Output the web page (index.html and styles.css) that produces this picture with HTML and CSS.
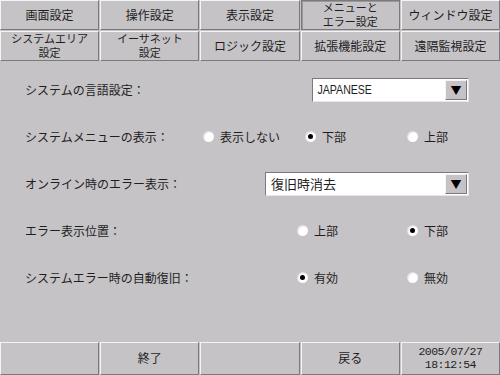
FILE: index.html
```html
<!DOCTYPE html>
<html lang="ja">
<head>
    <meta charset="UTF-8">
    <title>システム設定</title>
    <link rel="stylesheet" href="styles.css">
</head>
<body>
    <div class="screen">
        <!-- Tabs -->
        <div class="tabs">
            <div class="tab">画面設定</div>
            <div class="tab">操作設定</div>
            <div class="tab">表示設定</div>
            <div class="tab active wrap">メニューと<br>エラー設定</div>
            <div class="tab">ウィンドウ設定</div>
            <div class="tab wrap">システムエリア<br>設定</div>
            <div class="tab wrap">イーサネット<br>設定</div>
            <div class="tab">ロジック設定</div>
            <div class="tab">拡張機能設定</div>
            <div class="tab">遠隔監視設定</div>
        </div>

        <!-- Settings -->
        <div class="settings">
            <div class="row">
                <span class="label">システムの言語設定：</span>
                <div class="select lang">
                    <span class="select-text small">JAPANESE</span>
                    <span class="select-btn">▼</span>
                </div>
            </div>
            <div class="row">
                <span class="label">システムメニューの表示：</span>
                <div class="options three">
                    <span class="radio"><i></i>表示しない</span>
                    <span class="radio checked"><i></i>下部</span>
                    <span class="radio"><i></i>上部</span>
                </div>
            </div>
            <div class="row">
                <span class="label">オンライン時のエラー表示：</span>
                <div class="select err">
                    <span class="select-text">復旧時消去</span>
                    <span class="select-btn">▼</span>
                </div>
            </div>
            <div class="row">
                <span class="label">エラー表示位置：</span>
                <div class="options two">
                    <span class="radio"><i></i>上部</span>
                    <span class="radio checked"><i></i>下部</span>
                </div>
            </div>
            <div class="row">
                <span class="label">システムエラー時の自動復旧：</span>
                <div class="options two">
                    <span class="radio checked"><i></i>有効</span>
                    <span class="radio"><i></i>無効</span>
                </div>
            </div>
        </div>

        <!-- Bottom bar -->
        <div class="bottom">
            <div class="tab"></div>
            <div class="tab">終了</div>
            <div class="tab"></div>
            <div class="tab">戻る</div>
            <div class="tab clock">2005/07/27<br>18:12:54</div>
        </div>
    </div>
</body>
</html>
```

FILE: styles.css
```css
:root {
    --bg: #c6c3c6;
    --light: #f4f4f4;
    --shade: #7b797b;
    --text: #1e1e1e;
}

body {
    margin: 0;
    background: var(--bg);
    font-family: "Noto Sans CJK JP", "Liberation Sans", sans-serif;
    font-size: 12px;
    color: var(--text);
}

.screen {
    display: flex;
    flex-direction: column;
    width: 500px;
    height: 375px;
}

.tabs,
.bottom {
    display: grid;
    grid-template-columns: repeat(5, 1fr);
    column-gap: 1px;
    row-gap: 1px;
}

.tabs {
    grid-auto-rows: 30px;
    padding-bottom: 1px;
}

.bottom {
    height: 33px;
}

.tab {
    display: flex;
    align-items: center;
    justify-content: center;
    text-align: center;
    line-height: 1.08;
    background: var(--bg);
    border: 1px solid;
    border-color: var(--light) var(--shade) var(--shade) var(--light);
}

.tab.wrap {
    font-size: 11px;
    line-height: 1.25;
}

/* pressed tab: dark frame all round */
.tab.active {
    border-color: var(--shade);
    box-shadow: inset 1px 1px 0 #9a989a;
}

.clock {
    font-family: "Liberation Mono", monospace;
    font-size: 11.5px;
    letter-spacing: -0.5px;
    line-height: 1.1;
}

.settings {
    flex: 1;
    padding: 4px 0 0 25px;
}

.row {
    display: flex;
    align-items: center;
    height: 47px;
}

.label {
    width: 178px;
}

.select {
    display: flex;
    align-items: center;
    height: 24px;
    box-sizing: border-box;
    background: #fff;
    border: 1px solid;
    border-color: var(--shade) #e6e6e6 #e6e6e6 var(--shade);
    padding: 1px;
}

.lang {
    width: 157px;
    margin-left: 109px;
}

.err {
    width: 204px;
    margin-left: 62px;
    font-size: 13px;
}

.select-text {
    flex: 1;
    padding-left: 4px;
}

.small {
    font-family: "Liberation Sans", sans-serif;
    font-size: 12px;
    transform: scaleX(0.88);
    transform-origin: left;
}

.select-btn {
    width: 22px;
    height: 20px;
    box-sizing: border-box;
    background: var(--bg);
    border: 1px solid;
    border-color: var(--light) var(--shade) var(--shade) var(--light);
    display: flex;
    align-items: center;
    justify-content: center;
    font-size: 11px;
    color: #000;
}

.options {
    display: flex;
}

.three .radio:nth-child(1) { width: 102px; }
.three .radio:nth-child(2) { width: 102px; }

.two {
    margin-left: 94px;
}

.two .radio:first-child { width: 110px; }

.radio {
    display: flex;
    align-items: center;
    gap: 6px;
}

.radio i {
    width: 11px;
    height: 11px;
    border-radius: 50%;
    background: radial-gradient(circle at 60% 60%, #fff 45%, #d8d6d8 75%, #a9a7a9 100%);
    display: flex;
    align-items: center;
    justify-content: center;
}

.radio.checked i::after {
    content: "";
    width: 5px;
    height: 5px;
    border-radius: 50%;
    background: #000;
}
```
